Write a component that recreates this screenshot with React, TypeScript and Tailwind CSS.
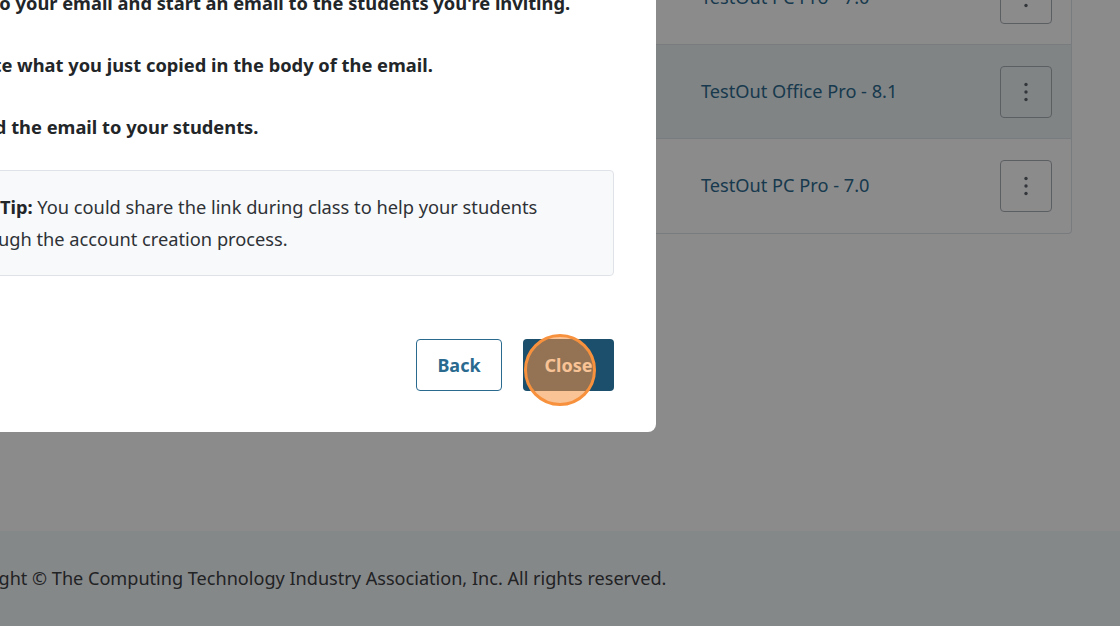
import React from "react";

function Kebab() {
  return (
    <button className="flex h-[52px] w-[52px] items-center justify-center rounded-[4px] border border-[#a9aeb2] bg-white/0">
      <svg width="4" height="20" viewBox="0 0 4 20" fill="#5f666c">
        <circle cx="2" cy="2.5" r="1.7" />
        <circle cx="2" cy="10" r="1.7" />
        <circle cx="2" cy="17.5" r="1.7" />
      </svg>
    </button>
  );
}

function Row({ name, hover, last }: { name: string; hover?: boolean; last?: boolean }) {
  return (
    <div
      className={
        "flex h-[94px] items-center justify-between pl-[48px] pr-[19px] " +
        (last ? "" : "border-b border-[#dfe3e6] ") +
        (hover ? "bg-[#edf2f3]" : "")
      }
    >
      <span className="text-[18.2px] text-[#2c6a8c]">{name}</span>
      <Kebab />
    </div>
  );
}

export default function App() {
  return (
    <div
      className="relative h-[626px] w-[1120px] overflow-hidden bg-white"
      style={{ fontFamily: '"Noto Sans", "Open Sans", sans-serif' }}
    >
      {/* underlying page */}
      <div className="flex h-full flex-col">
        <main className="flex h-[531px] justify-end pr-[48px]">
          <div className="mt-[-49px] w-[420px] self-start rounded-b-[4px] border border-t-0 border-[#dfe3e6]">
            <Row name="TestOut PC Pro - 7.0" />
            <Row name="TestOut Office Pro - 8.1" hover />
            <Row name="TestOut PC Pro - 7.0" last />
          </div>
        </main>
        <footer className="flex flex-1 items-start bg-[#f5f9f9] pt-[34px]">
          <p className="ml-[-56px] whitespace-nowrap text-[18.1px] text-[#3d4042]">
            Copyright © The Computing Technology Industry Association, Inc. All rights reserved.
          </p>
        </footer>
      </div>

      {/* overlay */}
      <div className="absolute inset-0 bg-[#000102]/[0.455]" />

      {/* modal */}
      <div className="absolute left-[-157px] top-[-60px] w-[813px] rounded-[8px] bg-white pb-[41px] pl-[42px] pr-[42px] pt-[49px] text-[#222629]">
        <ol className="flex flex-col gap-[34px] pl-[77px] text-[18.3px] font-bold leading-[28px]">
          <li>Go to your email and start an email to the students you're inviting.</li>
          <li>Paste what you just copied in the body of the email.</li>
          <li>Send the email to your students.</li>
        </ol>
        <div className="mt-[29px] rounded-[4px] border border-[#dfe3e8] bg-[#f8f9fb] pb-[20px] pl-[43px] pr-[48px] pt-[20px]">
          <p className="text-[18.25px] leading-[32px] text-[#2e3236]">
            <b className="font-bold text-[#222629]">Helpful Tip:</b> You could share the link during class to help your students get
            through the account creation process.
          </p>
        </div>
        <div className="mt-[63px] flex justify-end gap-[21px]">
          <button className="h-[52px] w-[86px] rounded-[4px] border border-[#2a6a8f] bg-white text-[18px] font-bold text-[#2a6a8f]">
            Back
          </button>
          <button className="relative h-[52px] w-[91px] rounded-[4px] bg-[#1b4f6b] text-[18px] font-bold text-white">
            Close
            <span className="absolute left-[1px] top-[-5px] h-[72px] w-[72px] rounded-full border-[3px] border-[#f7913d] bg-[#f6923f]/55" />
          </button>
        </div>
      </div>
    </div>
  );
}
